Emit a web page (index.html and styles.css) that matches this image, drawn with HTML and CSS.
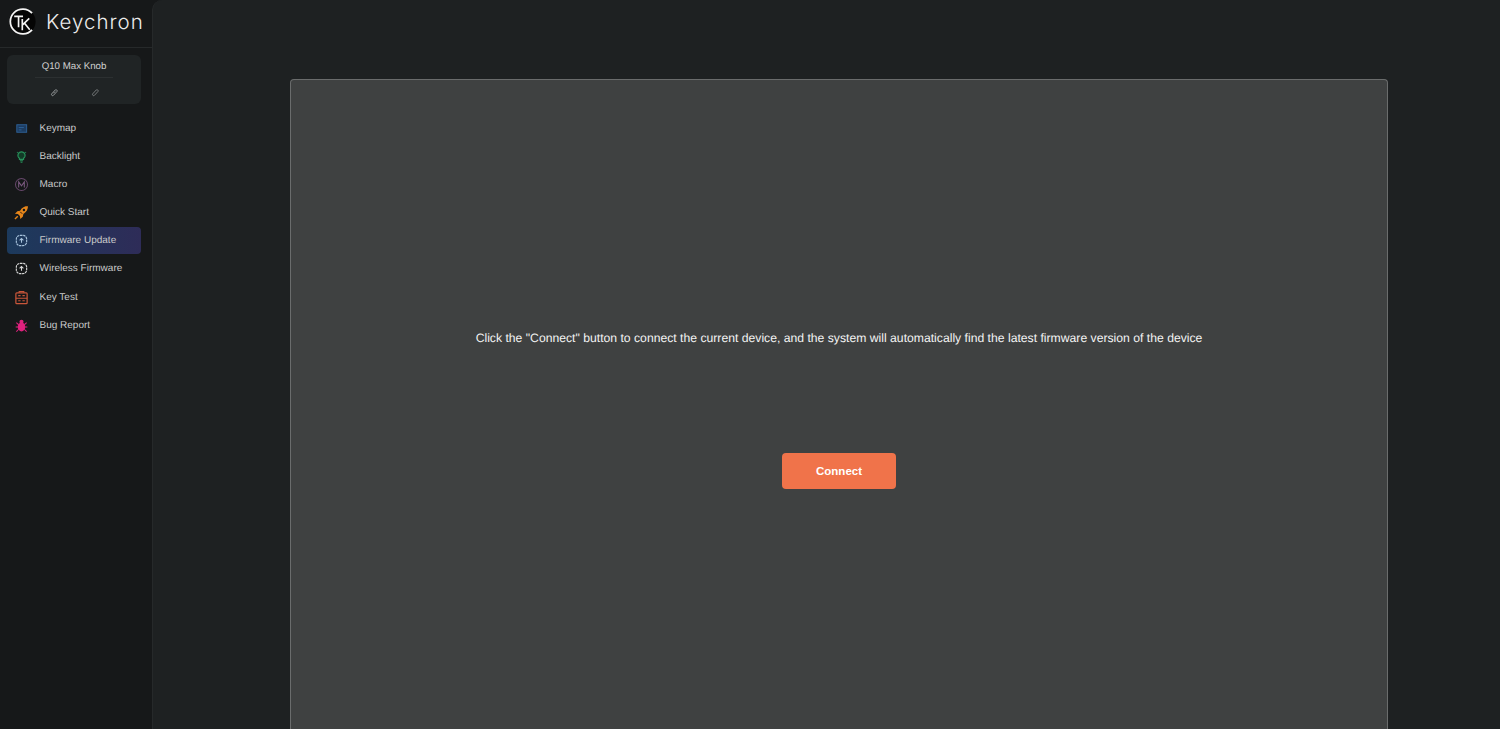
FILE: index.html
```html
<!DOCTYPE html>
<html>
<head>
  <meta charset="utf-8">
  <link rel="stylesheet" href="styles.css">
</head>
<body>
  <div class="app">
    <div class="sidebar">
      <div class="brand">
        <svg class="brand-mark" viewBox="0 0 26 26" width="27" height="27">
          <circle cx="13" cy="13" r="12.600" fill="#050505"/>
          <path d="M22.200 5A12 12 0 1 0 22.200 21" fill="none" stroke="#f4f4f4" stroke-width="1.700"/>
          <path d="M5 8H13.500M9.200 8V18.500" fill="none" stroke="#f4f4f4" stroke-width="1.600"/>
          <path d="M12.800 10.500V21.500M12.800 16.400L19.500 10M14.800 14.500L20 21" fill="none" stroke="#f4f4f4" stroke-width="1.600"/>
        </svg>
        <span class="brand-name">Keychron</span>
      </div>

      <div class="device">
        <div class="device-name">Q10 Max Knob</div>
        <div class="device-links">
          <svg viewBox="0 0 10 10" width="9" height="9"><path d="M1.800 6.600L5.800 2.200a1.300 1.300 0 0 1 2 1.600L3.800 8.200a1.300 1.300 0 0 1-2-1.600zM3.800 5.800L5.600 4" fill="none" stroke="#9a9d9e" stroke-width="1"/></svg>
          <svg viewBox="0 0 10 10" width="9" height="9"><path d="M1.800 6.600L5.800 2.200a1.300 1.300 0 0 1 2 1.600L3.800 8.200a1.300 1.300 0 0 1-2-1.600z" fill="none" stroke="#7d8081" stroke-width="1"/></svg>
        </div>
      </div>

      <div class="menu">
        <div class="menu-item">
          <svg class="menu-icon" viewBox="0 0 16 16"><rect x="3" y="4" width="10.500" height="8" fill="#1d3c60" stroke="#2e6299" stroke-width="1"/><path d="M5 7h5.500M5 9.500h3" stroke="#2e6299" stroke-width="1"/></svg>
          <span>Keymap</span>
        </div>
        <div class="menu-item">
          <svg class="menu-icon" viewBox="0 0 16 16"><path d="M8 3a3.800 3.800 0 0 0-2.200 6.900V11h4.400V9.900A3.800 3.800 0 0 0 8 3z" fill="#123b27" stroke="#27905a" stroke-width="1.200"/><path d="M6.300 12.600h3.400M7 14.200h2M3.200 3.200l.8.800M12.800 3.200l-.8.800" fill="none" stroke="#27905a" stroke-width="1.100"/></svg>
          <span>Backlight</span>
        </div>
        <div class="menu-item">
          <svg class="menu-icon" viewBox="0 0 16 16"><circle cx="8" cy="8" r="6.400" fill="none" stroke="#67486b" stroke-width="1.100"/><path d="M5 11.200V5.200L8 9.400l3-4.200v6" fill="none" stroke="#7b5a80" stroke-width="1.100"/></svg>
          <span>Macro</span>
        </div>
        <div class="menu-item">
          <svg class="menu-icon" viewBox="0 0 16 16"><path d="M15 1c-3.800 0-6.500 1.600-8.500 5L3.600 6.600 1 9.300l3.200.4 2.100 2.100.4 3.200 2.700-2.600.6-2.900c3.400-2 5-4.700 5-9.500z" fill="#e5851a"/><circle cx="10.600" cy="5.400" r="1.300" fill="#161819"/><path d="M1 15l3-3" stroke="#e5851a" stroke-width="1.500"/><path d="M6.700 7.300l2 2" stroke="#161819" stroke-width="1"/></svg>
          <span>Quick Start</span>
        </div>
        <div class="menu-item active">
          <svg class="menu-icon" viewBox="0 0 16 16"><rect x="2.500" y="2.500" width="11" height="11" rx="4" fill="none" stroke="#a9c4dd" stroke-width="1.200" stroke-dasharray="2.600 .7"/><path d="M8 10.500V6M6 7.800L8 5.800l2 2" fill="none" stroke="#a9c4dd" stroke-width="1.100"/></svg>
          <span>Firmware Update</span>
        </div>
        <div class="menu-item">
          <svg class="menu-icon" viewBox="0 0 16 16"><rect x="2.500" y="2.500" width="11" height="11" rx="4" fill="none" stroke="#d8d8d8" stroke-width="1.200" stroke-dasharray="2.600 .7"/><path d="M8 10.500V6M6 7.800L8 5.800l2 2" fill="none" stroke="#d8d8d8" stroke-width="1.100"/></svg>
          <span>Wireless Firmware</span>
        </div>
        <div class="menu-item">
          <svg class="menu-icon" viewBox="0 0 16 16"><rect x="2" y="3" width="12" height="11.500" rx="1" fill="none" stroke="#c9563a" stroke-width="1.300"/><path d="M5.500 3V1.500h5V3M2 8.700h12M4.500 6h2.500M9 6h2.500M4.500 11.500h2.500M9 11.500h2.500" fill="none" stroke="#c9563a" stroke-width="1.100"/></svg>
          <span>Key Test</span>
        </div>
        <div class="menu-item">
          <svg class="menu-icon" viewBox="0 0 16 16"><ellipse cx="8" cy="9.500" rx="4" ry="4.800" fill="#e0227e"/><circle cx="8" cy="4" r="2.200" fill="#e0227e"/><path d="M2.500 5L5 7.200M13.500 5L11 7.200M1.800 9.500h3M14.200 9.500h-3M2.500 14.500L5 12M13.500 14.500L11 12" fill="none" stroke="#e0227e" stroke-width="1.100"/></svg>
          <span>Bug Report</span>
        </div>
      </div>
    </div>

    <div class="main">
      <div class="panel">
        <p class="panel-text">Click the "Connect" button to connect the current device, and the system will automatically find the latest firmware version of the device</p>
        <button class="connect-btn">Connect</button>
      </div>
    </div>
  </div>
</body>
</html>
```

FILE: styles.css
```css
html, body {
  height: 100%;
}

body {
  margin: 0;
  overflow: hidden;
  font-family: "Liberation Sans", Arial, sans-serif;
  text-rendering: geometricPrecision;
  background-color: #161819;
  color: #d6d7d7;
}

.app {
  display: flex;
  height: 729px;
}

.sidebar {
  width: 152px;
  flex-shrink: 0;
  background-color: #161819;
}

.brand {
  display: flex;
  align-items: center;
  gap: 10px;
  height: 48px;
  padding: 0 0 5px 9px;
  box-sizing: border-box;
  border-bottom: 1px solid #26292a;
}

.brand-name {
  font-family: Inter, sans-serif;
  font-size: 20.500px;
  font-weight: 300;
  letter-spacing: 1px;
  color: #ececec;
}

.device {
  margin: 7px 11px 0 7px;
  height: 49px;
  border-radius: 6px;
  background-color: #202425;
}

.device-name {
  margin: 0 28px;
  height: 22px;
  line-height: 23px;
  text-align: center;
  font-size: 9.700px;
  color: #d0d1d1;
  border-bottom: 1px solid #2c3031;
}

.device-links {
  display: flex;
  justify-content: center;
  align-items: center;
  gap: 32px;
  height: 28px;
  padding-left: 2px;
}

.menu {
  display: flex;
  flex-direction: column;
  gap: 1.150px;
  margin: 10.700px 11px 0 7px;
}

.menu-item {
  display: flex;
  align-items: center;
  gap: 10.500px;
  height: 27px;
  padding-left: 7px;
  border-radius: 4px;
  font-size: 10px;
  color: #c9caca;
}

.menu-item.active {
  background: linear-gradient(90deg, #1c3a5c, #2e2c58);
}

.menu-icon {
  width: 15px;
  height: 15px;
  flex-shrink: 0;
}

.main {
  flex: 1;
  display: flex;
  box-sizing: border-box;
  height: 729px;
  padding: 79px 112px 0 137px;
  background-color: #1e2122;
  border-left: 1px solid #26292a;
  border-top-left-radius: 10px;
}

.panel {
  flex: 1;
  display: flex;
  flex-direction: column;
  align-items: center;
  box-sizing: border-box;
  padding-top: 249px;
  border: 1px solid #6a6c6c;
  border-bottom: none;
  border-radius: 4px 4px 0 0;
  background-color: #3f4141;
}

.panel-text {
  margin: 0;
  font-size: 12.200px;
  line-height: 18px;
  color: #f4f4f4;
}

.connect-btn {
  margin-top: 106px;
  width: 114px;
  height: 36px;
  border: none;
  border-radius: 4px;
  background-color: #f0734a;
  color: #fff;
  font-family: inherit;
  font-size: 11.500px;
  font-weight: 700;
}
```
